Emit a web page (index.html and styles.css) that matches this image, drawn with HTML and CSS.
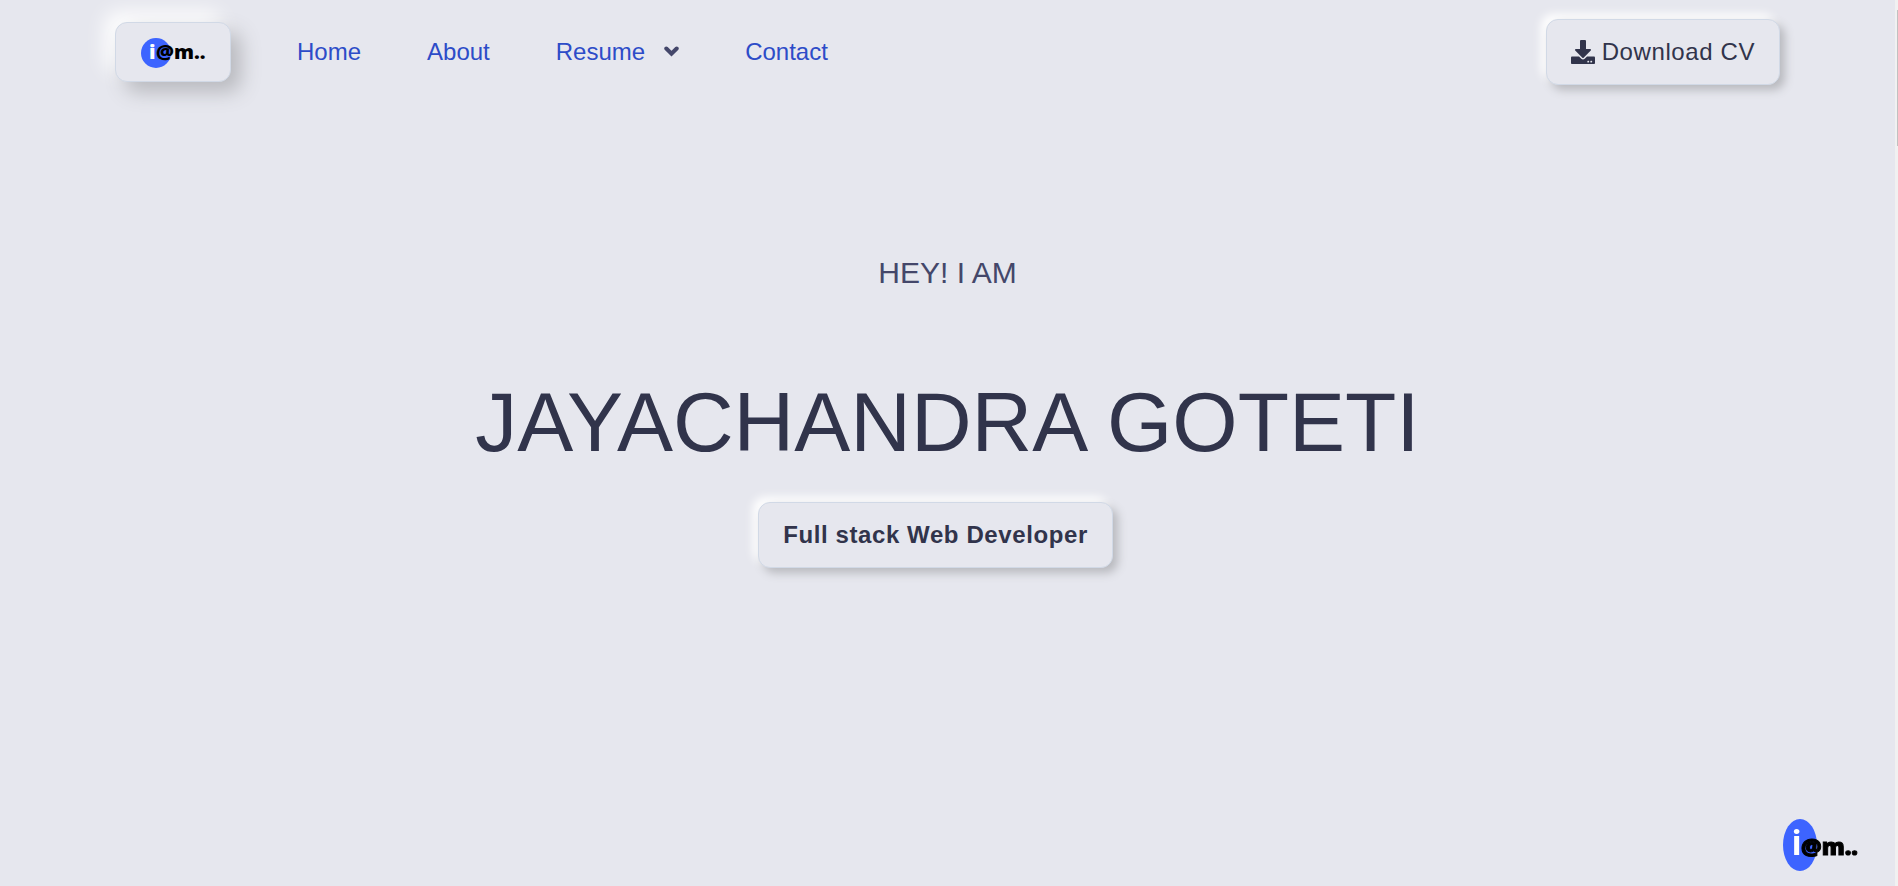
FILE: index.html
```html
<!DOCTYPE html>
<html lang="en">
<head>
<meta charset="utf-8">
<title>Jayachandra Goteti</title>
<link rel="stylesheet" href="styles.css">
</head>
<body>
<div class="page">
  <header class="navbar">
    <a class="brand" href="#home" aria-label="Home page">
      <svg class="brand-logo" viewBox="0 0 66 32" aria-hidden="true">
        <circle cx="16" cy="17" r="15" fill="#3d64ff"/>
        <g class="logo-text">
          <text x="9" y="23" fill="#fff">i</text>
          <text x="16" y="23">@m..</text>
        </g>
      </svg>
    </a>
    <nav class="menu">
      <a href="#home">Home</a>
      <a href="#about">About</a>
      <a class="dropdown" href="#resume">Resume
        <svg class="chevron" viewBox="0 0 15 12" aria-hidden="true"><path d="M2.300 2.500 7.500 7.700l5.200-5.200" fill="none" stroke="currentColor" stroke-width="4" stroke-linejoin="miter" stroke-linecap="round"/></svg>
      </a>
      <a href="#contact">Contact</a>
    </nav>
    <button class="btn download" type="button">
      <svg class="download-icon" viewBox="0 0 512 512" aria-hidden="true"><path fill="currentColor" d="M216 0h80c13.300 0 24 10.700 24 24v168h87.700c17.800 0 26.700 21.500 14.100 34.100L269.700 378.300c-7.500 7.500-19.800 7.500-27.300 0L90.100 226.100c-12.600-12.600-3.700-34.100 14.100-34.100H192V24c0-13.300 10.700-24 24-24zm296 376v112c0 13.300-10.700 24-24 24H24c-13.300 0-24-10.700-24-24V376c0-13.300 10.700-24 24-24h146.700l49 49c20.100 20.100 52.500 20.100 72.600 0l49-49H488c13.300 0 24 10.700 24 24zm-124 88c0-11-9-20-20-20s-20 9-20 20 9 20 20 20 20-9 20-20zm64 0c0-11-9-20-20-20s-20 9-20 20 9 20 20 20 20-9 20-20z"/></svg>
      <span>Download CV</span>
    </button>
  </header>
  <main class="hero">
    <p class="greeting">HEY! I AM</p>
    <h1 class="name">JAYACHANDRA GOTETI</h1>
    <button class="btn role" type="button">Full stack Web Developer</button>
  </main>
  <a class="corner-logo" href="#home" aria-label="Back to top">
    <svg viewBox="0 0 78 54" aria-hidden="true">
      <ellipse cx="18" cy="27" rx="17" ry="26" fill="#3d64ff"/>
      <g class="logo-text logo-text-large">
        <text class="logo-initial" x="10" y="37" fill="#fff">i</text>
        <text x="19" y="37" stroke="#000">@m..</text>
      </g>
    </svg>
  </a>
</div>
<div class="scroll-track"><div class="scroll-thumb"></div></div>
</body>
</html>
```
FILE: styles.css
```css
* { box-sizing: border-box; }

body {
  margin: 0;
  display: flex;
  min-height: 100vh;
  background: #e6e7ee;
  color: #44476a;
  font-family: "Liberation Sans", Arial, sans-serif;
  font-size: 24px;
  line-height: 36px;
}

a { color: #2d4cc8; text-decoration: none; }

.page { flex: 1; min-width: 0; }

.navbar {
  display: flex;
  align-items: center;
  padding: 19px 115px 0;
}

.brand {
  display: flex;
  align-items: center;
  justify-content: center;
  width: 116px;
  height: 60px;
  border: 1px solid #d1d9e6;
  border-radius: 12px;
  background: #e6e7ee;
  box-shadow: 10px 10px 20px #b8b9be, -10px -10px 20px #fff;
}

.brand-logo { width: 66px; height: 32px; }

.logo-text {
  fill: #000;
  font-family: "Open Sans", sans-serif;
  font-weight: 800;
  font-size: 20px;
}

.logo-text-large { font-size: 23px; }

.logo-initial {
  font-family: Roboto, sans-serif;
  font-size: 35px;
  font-weight: 700;
}

.menu {
  display: flex;
  gap: 66px;
  margin-left: 66px;
}

.dropdown { display: flex; align-items: center; gap: 19px; }

.chevron { width: 15px; height: 12px; color: #44476a; }

.btn {
  display: flex;
  align-items: center;
  justify-content: center;
  height: 66px;
  padding: 0 24px;
  border: 1px solid #d1d9e6;
  border-radius: 12px;
  background: #e6e7ee;
  color: #31344b;
  font: inherit;
  letter-spacing: 0.025em;
  box-shadow: 5px 5px 10px #b8b9be, -5px -5px 10px #fff;
}

.download { gap: 7px; margin-left: auto; }

.download-icon { width: 24px; height: 24px; }

.hero {
  display: flex;
  flex-direction: column;
  align-items: center;
  padding-top: 164px;
}

.greeting {
  margin: 0;
  font-size: 30px;
  line-height: 48px;
}

.name {
  margin: 74px 0 29px;
  color: #31344b;
  font-size: 84px;
  font-weight: 400;
  line-height: 102px;
}

.role { margin-right: 24px; font-weight: 700; }

.corner-logo {
  position: fixed;
  right: 38px;
  bottom: 14px;
  width: 78px;
  height: 54px;
}

.corner-logo svg { display: block; width: 78px; height: 54px; }

.scroll-track {
  width: 3px;
  padding: 10px 0 0 2px;
  background: #f1f1f1;
}

.scroll-thumb { height: 136px; background: #c1c1c1; }
```
